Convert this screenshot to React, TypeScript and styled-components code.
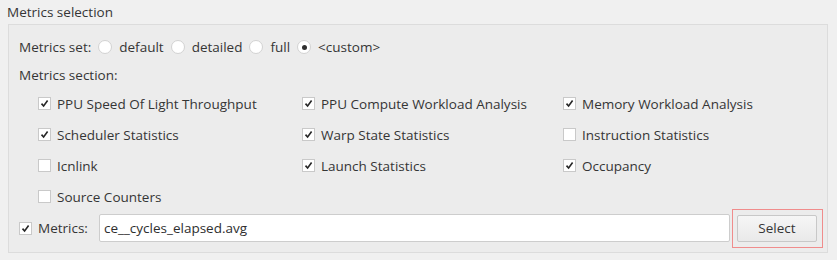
import React from "react";
import styled, { createGlobalStyle } from "styled-components";

const GlobalStyle = createGlobalStyle`
  body {
    margin: 0;
    background: #f0f0f0;
    font-family: "Open Sans", "Noto Sans", sans-serif;
    font-size: 13.5px;
    color: #353535;
  }
`;

const Page = styled.div`
  width: 837px;
  height: 260px;
  box-sizing: border-box;
  padding: 4px 0 0 8px;
`;

const Title = styled.div`
  height: 20px;
  line-height: 16px;
  margin-left: -1px;
`;

const GroupBox = styled.div`
  width: 820px;
  height: 229px;
  box-sizing: border-box;
  border: 1px solid #dcdcdc;
  background: #ececec;
  padding: 11px 0 0 10px;
  display: flex;
  flex-direction: column;
`;

const Row = styled.div<{ $h: number; $mt?: number }>`
  display: flex;
  align-items: center;
  height: ${(p) => p.$h}px;
  margin-top: ${(p) => p.$mt ?? 0}px;
  & > * {
    flex-shrink: 0;
  }
`;

const RadioItem = styled.label`
  display: flex;
  align-items: center;
  margin-left: 7px;
`;

const RadioDot = styled.span<{ $on?: boolean }>`
  width: 14px;
  height: 14px;
  box-sizing: border-box;
  border-radius: 50%;
  border: 1px solid #d2d2d2;
  background: #fff;
  margin-right: 7px;
  display: flex;
  align-items: center;
  justify-content: center;
  &::after {
    content: "";
    width: 5px;
    height: 5px;
    border-radius: 50%;
    background: ${(p) => (p.$on ? "#2e2e2e" : "transparent")};
  }
`;

const Grid = styled.div`
  display: grid;
  grid-template-columns: 264px 261px auto;
  grid-auto-rows: 31px;
  margin-left: 19px;
  margin-top: 2px;
`;

const CheckItem = styled.label`
  display: flex;
  align-items: center;
`;

const Box = styled.span`
  width: 13px;
  height: 13px;
  box-sizing: border-box;
  border: 1px solid #c9c9c9;
  background: #fff;
  margin-right: 6px;
  display: flex;
  align-items: center;
  justify-content: center;
  flex-shrink: 0;
`;

const MetricsLabel = styled.span`
  width: 61px;
`;

const TextInput = styled.div`
  width: 631px;
  height: 28px;
  box-sizing: border-box;
  border: 1px solid #cdcdcd;
  border-radius: 2px;
  background: #fff;
  display: flex;
  align-items: center;
  padding-left: 4px;
  color: #2e2e2e;
`;

const Highlight = styled.div`
  margin-left: 2px;
  border: 1px solid #f08c8c;
  padding: 5px 5px 5px 4px;
`;

const Button = styled.button`
  width: 80px;
  height: 27px;
  border: 1px solid #c8c8c8;
  border-radius: 2px;
  background: linear-gradient(#f6f6f6, #e9e9e9);
  font: inherit;
  color: #353535;
  display: block;
`;

const Check = ({ on }: { on?: boolean }) => (
  <Box>
    {on && (
      <svg width="9" height="9" viewBox="0 0 9 9">
        <path d="M1.5 4.6 L3.6 7 L7.6 1.6" fill="none" stroke="#262626" strokeWidth="1.6" />
      </svg>
    )}
  </Box>
);

const sections: [string, boolean][] = [
  ["PPU Speed Of Light Throughput", true],
  ["PPU Compute Workload Analysis", true],
  ["Memory Workload Analysis", true],
  ["Scheduler Statistics", true],
  ["Warp State Statistics", true],
  ["Instruction Statistics", false],
  ["Icnlink", false],
  ["Launch Statistics", true],
  ["Occupancy", true],
  ["Source Counters", false],
];

const sets = ["default", "detailed", "full", "<custom>"];

export default function App() {
  return (
    <Page>
      <GlobalStyle />
      <Title>Metrics selection</Title>
      <GroupBox>
        <Row $h={22}>
          <span>Metrics set:</span>
          {sets.map((s) => (
            <RadioItem key={s}>
              <RadioDot $on={s === "<custom>"} />
              {s}
            </RadioItem>
          ))}
        </Row>
        <Row $h={22} $mt={6}>
          Metrics section:
        </Row>
        <Grid>
          {sections.map(([name, on]) => (
            <CheckItem key={name}>
              <Check on={on} />
              {name}
            </CheckItem>
          ))}
        </Grid>
        <Row $h={28} $mt={2}>
          <Check on />
          <MetricsLabel>Metrics:</MetricsLabel>
          <TextInput>ce__cycles_elapsed.avg</TextInput>
          <Highlight>
            <Button>Select</Button>
          </Highlight>
        </Row>
      </GroupBox>
    </Page>
  );
}
